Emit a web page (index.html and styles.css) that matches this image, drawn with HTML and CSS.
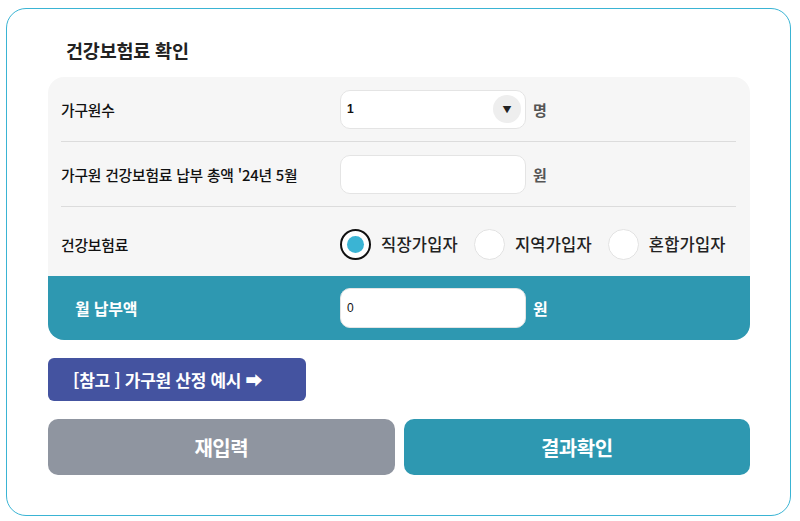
FILE: index.html
```html
<!DOCTYPE html>
<html lang="ko">
<head>
    <meta charset="UTF-8">
    <meta name="viewport" content="width=device-width, initial-scale=1.0">
    <title>건강보험료 확인</title>
    <link rel="stylesheet" href="styles.css">
</head>
<body>
    <div class="card">
        <h2 class="title">건강보험료 확인</h2>

        <div class="panel">
            <div class="row">
                <div class="label">가구원수</div>
                <div class="ctrl">
                    <div class="box select">
                        <span class="val bold">1</span>
                        <span class="arrow">&#9660;</span>
                    </div>
                    <span class="unit">명</span>
                </div>
            </div>
            <div class="row">
                <div class="label">가구원 건강보험료 납부 총액 '24년 5월</div>
                <div class="ctrl">
                    <div class="box"></div>
                    <span class="unit">원</span>
                </div>
            </div>
            <div class="row row-radio">
                <div class="label">건강보험료</div>
                <div class="ctrl radios">
                    <label class="radio on"><span class="dot"></span>직장가입자</label>
                    <label class="radio"><span class="dot"></span>지역가입자</label>
                    <label class="radio"><span class="dot"></span>혼합가입자</label>
                </div>
            </div>
            <div class="row row-total">
                <div class="label">월 납부액</div>
                <div class="ctrl">
                    <div class="box tall"><span class="val">0</span></div>
                    <span class="unit">원</span>
                </div>
            </div>
        </div>

        <button class="ref-btn">[참고 ] 가구원 산정 예시 &#10145;</button>

        <div class="actions">
            <button class="btn btn-reset">재입력</button>
            <button class="btn btn-ok">결과확인</button>
        </div>
    </div>
</body>
</html>
```

FILE: styles.css
```css
body {
    margin:0;
    background:#fff;
    font-family:"Noto Sans CJK KR", "Noto Sans", sans-serif;
    color:#111;
}
.card {
    margin:8px 9px 0 6px;
    height:508px;
    box-sizing:border-box;
    border:1px solid #3ab4d4;
    border-radius:20px;
    padding:29px 40px 0 41px;
}
.title {
    margin:0 0 15px;
    padding-left:18px;
    font-size:18.5px;
    line-height:24px;
    font-weight:bold;
    color:#222;
    letter-spacing:-0.2px;
}
.panel {
    background:#f6f6f6;
    border-radius:16px;
    overflow:hidden;
}
.row {
    display:flex;
    align-items:center;
    height:64px;
    margin:0 14px 0 13px;
    border-bottom:1px solid #dcdcdc;
}
.row-radio {
    height:69px;
    padding-top:5px;
    box-sizing:border-box;
    border-bottom:none;
}
.row-total {
    margin:0;
    padding:0 14px 0 27px;
    background:#2e98b1;
    border-bottom:none;
}
.label {
    width:279px;
    flex:none;
    font-size:14.8px;
    font-weight:500;
    letter-spacing:-0.2px;
}
.row-total .label {
    width:265px;
    color:#fff;
    font-weight:bold;
    font-size:16px;
}
.ctrl {
    display:flex;
    align-items:center;
}
.box {
    width:186px;
    height:39px;
    box-sizing:border-box;
    background:#fff;
    border:1px solid #e4e4e4;
    border-radius:10px;
    display:flex;
    align-items:center;
    padding:0 6px;
}
.box.tall {height:40px;}
.val {
    font-family:"Liberation Sans", Arial, sans-serif;
    font-size:12px;
}
.val.bold {font-weight:bold;}
.select {justify-content:space-between; padding-right:4px;}
.arrow {
    width:28px;
    height:28px;
    border-radius:50%;
    background:#eee;
    display:flex;
    align-items:center;
    justify-content:center;
    font-size:9px;
    color:#222;
}
.unit {
    margin-left:7px;
    font-size:15px;
    font-weight:bold;
    color:#555;
}
.row-total .unit {color:#fff; font-size:16px;}
.radio {
    display:flex;
    align-items:center;
    font-size:16.5px;
    font-weight:500;
    color:#222;
    margin-right:16px;
    letter-spacing:0.2px;
}
.radio:last-child {margin-right:0;}
.dot {
    width:31px;
    height:31px;
    box-sizing:border-box;
    border:1px solid #e2e2e2;
    border-radius:50%;
    background:#fff;
    margin-right:10px;
    position:relative;
}
.radio.on .dot {
    border:2px solid #111;
}
.radio.on .dot::after {
    content:"";
    position:absolute;
    left:5px;
    top:5px;
    width:17px;
    height:17px;
    border-radius:50%;
    background:#3ab4d4;
}
.ref-btn {
    display:block;
    margin-top:18px;
    width:258px;
    height:43px;
    border:none;
    border-radius:6px;
    background:#4453a0;
    color:#fff;
    font-family:inherit;
    font-size:17px;
    font-weight:bold;
    text-align:left;
    padding:0 0 0 25px;
    letter-spacing:-0.3px;
}
.actions {
    display:flex;
    gap:9px;
    margin-top:18px;
}
.btn {
    flex:1;
    height:56px;
    border:none;
    border-radius:10px;
    color:#fff;
    font-family:inherit;
    font-size:20px;
    font-weight:bold;
    letter-spacing:-0.5px;
}
.btn-reset {background:#8f95a0;}
.btn-ok {background:#2e98b1;}
```
